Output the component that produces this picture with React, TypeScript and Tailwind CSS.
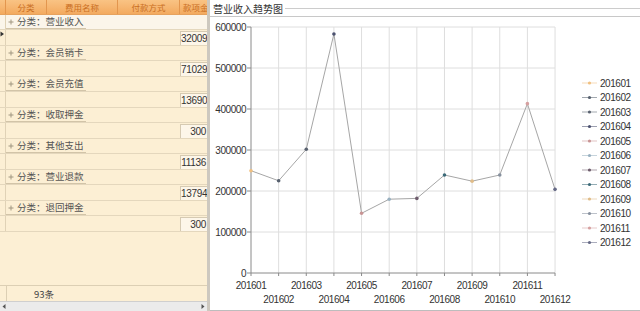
import React from 'react';

const groups = [
    { name: '营业收入', value: '32009' },
    { name: '会员销卡', value: '71029' },
    { name: '会员充值', value: '13690' },
    { name: '收取押金', value: '300' },
    { name: '其他支出', value: '11136' },
    { name: '营业退款', value: '13794' },
    { name: '退回押金', value: '300' },
];

const months = ['201601', '201602', '201603', '201604', '201605', '201606', '201607', '201608', '201609', '201610', '201611', '201612'];
const values = [249500, 225000, 301700, 583000, 145600, 180000, 182000, 239000, 224000, 239000, 413000, 204000];
const colors = ['#f0c080', '#56606e', '#5a6270', '#4c5270', '#c89494', '#98b0c0', '#6e5c6c', '#3c6a78', '#e0bc88', '#86909e', '#d6a0a0', '#666a86'];

const X0 = 251;
const STEP = 27.64;
const Y0 = 273;
const yOf = (v: number) => Y0 - (v / 100000) * 41;
const xOf = (i: number) => X0 + i * STEP;

export default function App() {
    return (
        <div className="w-[640px] h-[311px] flex bg-white overflow-hidden font-['Noto_Sans_CJK_SC',sans-serif]">
            {/* Left grid */}
            <div className="w-[207px] h-full flex flex-col bg-[#fcefd4] overflow-hidden">
                <div className="h-[15px] shrink-0 flex bg-gradient-to-b from-[#f9c384] to-[#f3aa5f] text-[8.5px] text-[#c96e22] leading-[15px] border-b border-[#e6a25e]">
                    <div className="w-[6px] border-r border-[#e3964e]" />
                    <div className="w-[41px] text-center border-r border-[#e3964e]">分类</div>
                    <div className="w-[71px] text-center border-r border-[#e3964e]">费用名称</div>
                    <div className="w-[62px] text-center border-r border-[#e3964e]">付款方式</div>
                    <div className="flex-1 pl-[3px] whitespace-nowrap overflow-hidden">款项金额</div>
                </div>

                <div className="flex-1 flex flex-col">
                    {groups.map((g, i) => (
                        <div key={g.name} className="flex flex-col">
                            <div className={`h-[15px] flex border-b border-[#e4d7bd] ${i === 0 ? 'bg-[#fbf5ea]' : ''}`}>
                                <div className="w-[6px] border-r border-[#e0d2b6]" />
                                <div className="w-[80px] flex items-center gap-[3px] pl-[2px] border-b border-[#d2c4a8] text-[9.5px] text-[#555] whitespace-nowrap">
                                    <svg width="6" height="6" viewBox="0 0 6 6">
                                        <path d="M0.5 3H5.5M3 0.5V5.5" stroke="#a09680" strokeWidth="1" />
                                    </svg>
                                    <span>分类：{g.name}</span>
                                </div>
                            </div>
                            <div className="h-[16px] flex border-b border-[#e4d7bd]">
                                <div className="w-[6px] border-r border-[#e0d2b6] relative">
                                    {i === 0 && (
                                        <svg className="absolute left-0 top-[1px]" width="5" height="6" viewBox="0 0 5 6">
                                            <path d="M0.5 0.5L4 3L0.5 5.5Z" fill="#333" />
                                        </svg>
                                    )}
                                </div>
                                <div className="flex-1" />
                                <div className="w-[27px] mt-[1px] bg-[#fdf6e9] border-l border-t border-[#d6cab2] text-right pr-[1px] text-[10px] leading-[14px] tracking-[-0.3px] text-[#333] font-['Liberation_Sans',sans-serif]">
                                    {g.value}
                                </div>
                            </div>
                        </div>
                    ))}
                </div>

                <div className="h-[16px] shrink-0 flex border-t border-[#dccfb4]">
                    <div className="w-[7px] border-r border-[#dccfb4]" />
                    <div className="pl-[27px] text-[9.5px] leading-[16px] text-[#444]">93条</div>
                </div>

                <div className="h-[10px] shrink-0 flex items-center justify-between bg-[#ebebeb] border-t border-[#cfcfcf] px-[2px]">
                    <svg width="4" height="5" viewBox="0 0 4 5"><path d="M3.5 0L0.5 2.5L3.5 5Z" fill="#555" /></svg>
                    <svg width="4" height="5" viewBox="0 0 4 5"><path d="M0.5 0L3.5 2.5L0.5 5Z" fill="#555" /></svg>
                </div>
            </div>

            {/* Splitter */}
            <div className="w-[3px] h-full bg-[#cdc8bf]" />

            {/* Chart */}
            <div className="flex-1 h-full flex flex-col">
                <div className="h-[17px] shrink-0 flex border-b border-[#c8c8c8]">
                    <div className="pl-[3px] pt-[2px] text-[10px] leading-[13px] text-[#333] whitespace-nowrap">营业收入趋势图</div>
                    <div className="flex-1 mt-[8px] ml-[2px] border-t border-[#cccccc]" />
                </div>
                <div className="flex-1 border-b border-[#bdbdbd]">
                    <ChartSvg />
                </div>
            </div>
        </div>
    );
}

function ChartSvg() {
    const ticks = [0, 1, 2, 3, 4, 5, 6];
    const pts = values.map((v, i) => `${xOf(i)},${yOf(v)}`).join(' ');
    const numFont = { fontFamily: "'Liberation Sans', Arial, sans-serif", fontSize: 10, letterSpacing: -0.45 };

    return (
        <svg width="430" height="293" viewBox="210 17 430 293">
            {/* grid */}
            {ticks.slice(1).map(t => (
                <line key={'h' + t} x1={X0} x2={xOf(11)} y1={yOf(t * 100000)} y2={yOf(t * 100000)} stroke="#dedede" strokeWidth="1" />
            ))}
            {months.slice(1).map((m, i) => (
                <line key={'v' + m} x1={xOf(i + 1)} x2={xOf(i + 1)} y1={27} y2={Y0} stroke="#dedede" strokeWidth="1" />
            ))}

            {/* axes */}
            <line x1={X0} x2={X0} y1={27} y2={Y0} stroke="#8a8a8a" strokeWidth="1" />
            <line x1={X0} x2={xOf(11)} y1={Y0} y2={Y0} stroke="#8a8a8a" strokeWidth="1" />
            {ticks.map(t => (
                <g key={'yt' + t}>
                    <line x1={X0 - 4} x2={X0} y1={yOf(t * 100000)} y2={yOf(t * 100000)} stroke="#8a8a8a" />
                    <text x={246} y={yOf(t * 100000) + 3.5} textAnchor="end" fill="#333" style={numFont}>
                        {t === 0 ? '0' : `${t}00000`}
                    </text>
                </g>
            ))}
            {months.map((m, i) => (
                <g key={'xt' + m}>
                    <line x1={xOf(i)} x2={xOf(i)} y1={Y0} y2={Y0 + 3} stroke="#8a8a8a" />
                    <text x={xOf(i)} y={i % 2 === 0 ? 289 : 303} textAnchor="middle" fill="#333" style={numFont}>
                        {m}
                    </text>
                </g>
            ))}

            {/* series */}
            <polyline points={pts} fill="none" stroke="#a6a6a6" strokeWidth="1" />
            {values.map((v, i) => (
                <circle key={'p' + i} cx={xOf(i)} cy={yOf(v)} r="1.8" fill={colors[i]} />
            ))}

            {/* legend */}
            {months.map((m, i) => {
                const y = 83 + i * 14.5;
                return (
                    <g key={'lg' + m}>
                        <line x1={582} x2={597} y1={y} y2={y} stroke={colors[i]} strokeOpacity="0.55" strokeWidth="1" />
                        <circle cx={589.5} cy={y} r="1.6" fill={colors[i]} />
                        <text x={600} y={y + 3.5} fill="#333" style={numFont}>{m}</text>
                    </g>
                );
            })}
        </svg>
    );
}
